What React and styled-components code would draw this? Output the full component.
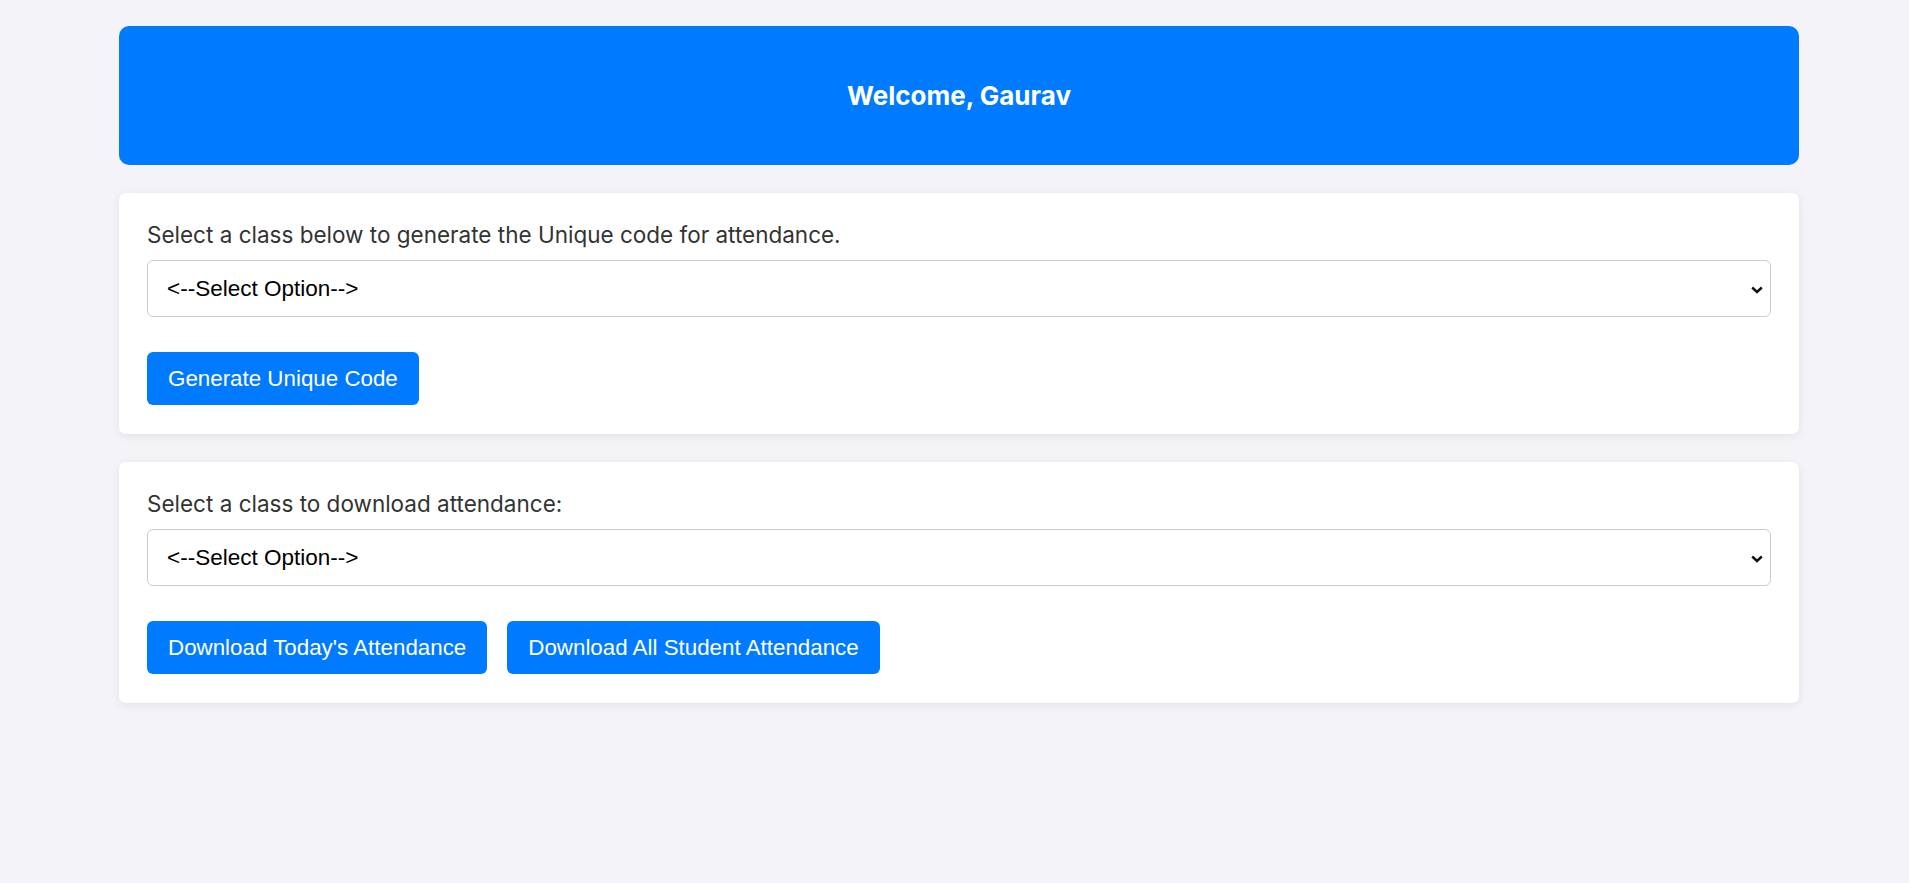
import React from "react";
import styled, { createGlobalStyle } from "styled-components";

const GlobalStyle = createGlobalStyle`
  html, body {
    margin: 0;
    padding: 0;
    background: #f4f4f8;
    font-family: Inter, "Noto Sans", sans-serif;
  }
`;

const Page = styled.div`
  padding: 26px 110px 40px 119px;
  display: flex;
  flex-direction: column;
  gap: 28px;
`;

const Header = styled.header`
  height: 139px;
  background: #007bff;
  border-radius: 10px;
  display: flex;
  align-items: center;
  justify-content: center;
  color: #fff;
  font-family: Inter, sans-serif;
  font-weight: 700;
  font-size: 26px;
`;

const Card = styled.section`
  background: #fff;
  border-radius: 7px;
  box-shadow: 0 2px 10px rgba(0, 0, 0, 0.08);
  padding: 28px 28px 29px;
  display: flex;
  flex-direction: column;
  align-items: stretch;
`;

const Label = styled.label`
  display: block;
  font-family: Inter, sans-serif;
  font-size: 22.5px;
  line-height: 28px;
  color: #333;
  margin-bottom: 11px;
`;

const SelectWrap = styled.div`
  position: relative;
`;

const Select = styled.select`
  height: 57px;
  width: 100%;
  box-sizing: border-box;
  border: 1px solid #cccccc;
  border-radius: 6px;
  background: #fff;
  padding: 0 40px 0 19px;
  font-family: "Liberation Sans", Arial, sans-serif;
  font-size: 22.5px;
  color: #000;
  appearance: none;
  -webkit-appearance: none;
  outline: none;
`;

const Chevron = styled.svg`
  position: absolute;
  right: 8px;
  top: 50%;
  width: 12px;
  height: 8px;
  margin-top: -3px;
  pointer-events: none;
`;

const ButtonRow = styled.div`
  display: flex;
  gap: 20px;
  margin-top: 35px;
`;

const Button = styled.button`
  height: 53px;
  padding: 0 21px;
  border: none;
  border-radius: 6px;
  background: #007bff;
  color: #fff;
  font-family: "Liberation Sans", Arial, sans-serif;
  font-size: 22.35px;
  cursor: pointer;
`;

function ClassSelect() {
  return (
    <SelectWrap>
      <Select defaultValue="">
        <option value="">&lt;--Select Option--&gt;</option>
      </Select>
      <Chevron viewBox="0 0 12 8">
        <path d="M1.2 1.5 L6 6 L10.8 1.5" fill="none" stroke="#111" strokeWidth="2.4" />
      </Chevron>
    </SelectWrap>
  );
}

export default function App() {
  return (
    <>
      <GlobalStyle />
      <Page>
        <Header>Welcome, Gaurav</Header>
        <Card>
          <Label>Select a class below to generate the Unique code for attendance.</Label>
          <ClassSelect />
          <ButtonRow>
            <Button>Generate Unique Code</Button>
          </ButtonRow>
        </Card>
        <Card>
          <Label>Select a class to download attendance:</Label>
          <ClassSelect />
          <ButtonRow>
            <Button>Download Today's Attendance</Button>
            <Button>Download All Student Attendance</Button>
          </ButtonRow>
        </Card>
      </Page>
    </>
  );
}
